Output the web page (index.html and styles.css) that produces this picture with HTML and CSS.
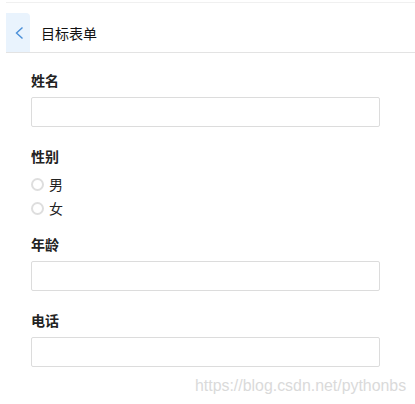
FILE: index.html
```html
<!DOCTYPE html>
<html lang="zh">
<head>
<meta charset="utf-8">
<title>目标表单</title>
<link rel="stylesheet" href="styles.css">
</head>
<body>
<div class="page">
  <div class="topline"></div>
  <header class="header">
    <button class="back" type="button" aria-label="返回">
      <svg width="24" height="39" viewBox="0 0 24 39"><polyline points="16.5,14.5 10.5,20 16.5,25.5" fill="none" stroke="#4a8fd8" stroke-width="1.4"/></svg>
    </button>
    <h1 class="title">目标表单</h1>
  </header>
  <form class="form">
    <div class="group">
      <label class="label">姓名</label>
      <input class="input" type="text">
    </div>
    <div class="group group--radio">
      <label class="label">性别</label>
      <div class="radios">
        <label class="radio"><span class="circle"></span><span>男</span></label>
        <label class="radio"><span class="circle"></span><span>女</span></label>
      </div>
    </div>
    <div class="group">
      <label class="label">年龄</label>
      <input class="input" type="text">
    </div>
    <div class="group">
      <label class="label">电话</label>
      <input class="input" type="text">
    </div>
  </form>
  <div class="watermark">https://blog.csdn.net/pythonbs</div>
</div>
</body>
</html>
```

FILE: styles.css
```css
* { box-sizing: border-box; }
html, body { margin: 0; padding: 0; background: #fff; }
body {
  font-family: "Noto Sans CJK SC", "Noto Sans", sans-serif;
  color: #222;
  width: 415px;
  height: 404px;
  overflow: hidden;
}
.page { position: relative; height: 404px; }
.topline {
  margin: 2px 0 0 6px;
  height: 1px;
  background: #f0f0f0;
}
.header {
  display: flex;
  align-items: center;
  margin: 10px 0 0 6px;
  height: 40px;
  border-bottom: 1px solid #e3e3e3;
}
.back {
  width: 24px;
  height: 39px;
  padding: 0;
  border: 0;
  background: #e9f3fd;
  border-top-right-radius: 4px;
  display: flex;
  align-items: flex-start;
}
.title {
  margin: 0 0 0 11px;
  font-size: 14px;
  font-weight: normal;
  line-height: 20px;
  color: #111;
}
.form {
  padding: 17px 35px 0 31px;
  display: flex;
  flex-direction: column;
  gap: 19px;
}
.group { display: flex; flex-direction: column; }
.group--radio { margin-bottom: -5px; }
.label {
  font-size: 14px;
  font-weight: bold;
  line-height: 20px;
  color: #222;
  margin-bottom: 7px;
}
.group--radio .label { margin-bottom: 6px; }
.input {
  height: 30px;
  width: 349px;
  border: 1px solid #dcdcdc;
  border-radius: 2px;
  background: #fff;
  outline: none;
}
.radios { display: flex; flex-direction: column; }
.radio {
  display: flex;
  align-items: center;
  height: 24px;
  font-size: 14px;
  color: #222;
}
.circle {
  width: 13px;
  height: 13px;
  border: 2px solid #dedede;
  border-radius: 50%;
  margin-right: 5px;
}
.watermark {
  position: absolute;
  left: 195px;
  top: 374px;
  font-family: "Liberation Sans", Arial, sans-serif;
  font-size: 15.9px;
  line-height: 20px;
  color: #dadada;
}
```
